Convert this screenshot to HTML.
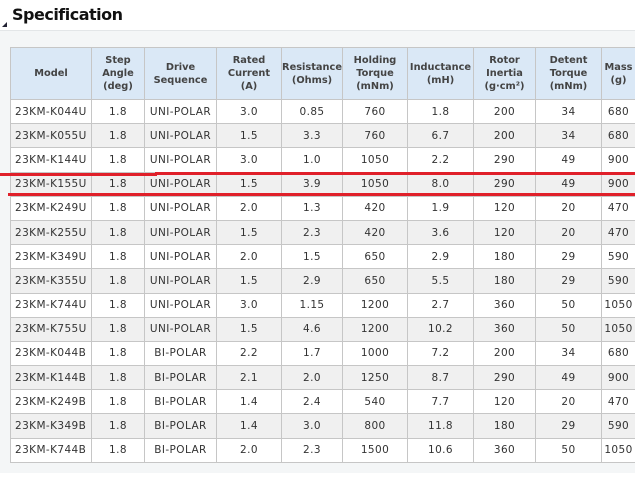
<!DOCTYPE html><html><head><style>
body{margin:0;width:635px;height:495px;background:#fff;position:relative;overflow:hidden;font-family:"DejaVu Sans",Verdana,sans-serif}
h1{position:absolute;left:12px;top:5px;margin:0;font:bold 16px "DejaVu Sans",sans-serif;color:#111;letter-spacing:-0.5px}
.tri{position:absolute;left:2px;top:22px;width:0;height:0;border-left:5px solid transparent;border-bottom:5px solid #223;}
.bg{position:absolute;left:0;top:30px;width:635px;height:442px;background:#f4f6f7;border-top:1px solid #e3e6e8}
table{position:absolute;left:10px;top:47px;border-collapse:collapse;table-layout:fixed;width:625px}
td,th{border:1px solid #c6c6c6;text-align:center;font-size:10.5px;color:#333;padding:0;height:23.2px;white-space:nowrap;overflow:hidden;letter-spacing:0.4px}
th{background:#dae8f6;font-weight:bold;font-size:9.8px;height:51px;line-height:13px;color:#444;letter-spacing:0}
td:first-child{text-align:left;padding-left:4px}
tr:nth-child(odd) td{background:#f0f0f0}
tr:nth-child(even) td{background:#fff}
.r{position:absolute;background:#e0202a;height:3px}
</style></head><body>
<div class="bg"></div>
<div class="tri"></div>
<h1>Specification</h1>
<table>
<colgroup><col style="width:81px"><col style="width:53px"><col style="width:72px"><col style="width:65px"><col style="width:61px"><col style="width:65px"><col style="width:66px"><col style="width:62px"><col style="width:66px"><col style="width:34px"></colgroup>
<tr><th>Model</th><th>Step<br>Angle<br>(deg)</th><th>Drive<br>Sequence</th><th>Rated<br>Current<br>(A)</th><th>Resistance<br>(Ohms)</th><th>Holding<br>Torque<br>(mNm)</th><th>Inductance<br>(mH)</th><th>Rotor<br>Inertia<br>(g·cm²)</th><th>Detent<br>Torque<br>(mNm)</th><th>Mass<br>(g)</th></tr>
<tr><td>23KM-K044U</td><td>1.8</td><td>UNI-POLAR</td><td>3.0</td><td>0.85</td><td>760</td><td>1.8</td><td>200</td><td>34</td><td>680</td></tr>
<tr><td>23KM-K055U</td><td>1.8</td><td>UNI-POLAR</td><td>1.5</td><td>3.3</td><td>760</td><td>6.7</td><td>200</td><td>34</td><td>680</td></tr>
<tr><td>23KM-K144U</td><td>1.8</td><td>UNI-POLAR</td><td>3.0</td><td>1.0</td><td>1050</td><td>2.2</td><td>290</td><td>49</td><td>900</td></tr>
<tr><td>23KM-K155U</td><td>1.8</td><td>UNI-POLAR</td><td>1.5</td><td>3.9</td><td>1050</td><td>8.0</td><td>290</td><td>49</td><td>900</td></tr>
<tr><td>23KM-K249U</td><td>1.8</td><td>UNI-POLAR</td><td>2.0</td><td>1.3</td><td>420</td><td>1.9</td><td>120</td><td>20</td><td>470</td></tr>
<tr><td>23KM-K255U</td><td>1.8</td><td>UNI-POLAR</td><td>1.5</td><td>2.3</td><td>420</td><td>3.6</td><td>120</td><td>20</td><td>470</td></tr>
<tr><td>23KM-K349U</td><td>1.8</td><td>UNI-POLAR</td><td>2.0</td><td>1.5</td><td>650</td><td>2.9</td><td>180</td><td>29</td><td>590</td></tr>
<tr><td>23KM-K355U</td><td>1.8</td><td>UNI-POLAR</td><td>1.5</td><td>2.9</td><td>650</td><td>5.5</td><td>180</td><td>29</td><td>590</td></tr>
<tr><td>23KM-K744U</td><td>1.8</td><td>UNI-POLAR</td><td>3.0</td><td>1.15</td><td>1200</td><td>2.7</td><td>360</td><td>50</td><td>1050</td></tr>
<tr><td>23KM-K755U</td><td>1.8</td><td>UNI-POLAR</td><td>1.5</td><td>4.6</td><td>1200</td><td>10.2</td><td>360</td><td>50</td><td>1050</td></tr>
<tr><td>23KM-K044B</td><td>1.8</td><td>BI-POLAR</td><td>2.2</td><td>1.7</td><td>1000</td><td>7.2</td><td>200</td><td>34</td><td>680</td></tr>
<tr><td>23KM-K144B</td><td>1.8</td><td>BI-POLAR</td><td>2.1</td><td>2.0</td><td>1250</td><td>8.7</td><td>290</td><td>49</td><td>900</td></tr>
<tr><td>23KM-K249B</td><td>1.8</td><td>BI-POLAR</td><td>1.4</td><td>2.4</td><td>540</td><td>7.7</td><td>120</td><td>20</td><td>470</td></tr>
<tr><td>23KM-K349B</td><td>1.8</td><td>BI-POLAR</td><td>1.4</td><td>3.0</td><td>800</td><td>11.8</td><td>180</td><td>29</td><td>590</td></tr>
<tr><td>23KM-K744B</td><td>1.8</td><td>BI-POLAR</td><td>2.0</td><td>2.3</td><td>1500</td><td>10.6</td><td>360</td><td>50</td><td>1050</td></tr>
</table>
<div class="r" style="left:0;top:173px;width:157px"></div>
<div class="r" style="left:155px;top:172px;width:480px"></div>
<div class="r" style="left:8px;top:193px;width:627px"></div>
</body></html>
